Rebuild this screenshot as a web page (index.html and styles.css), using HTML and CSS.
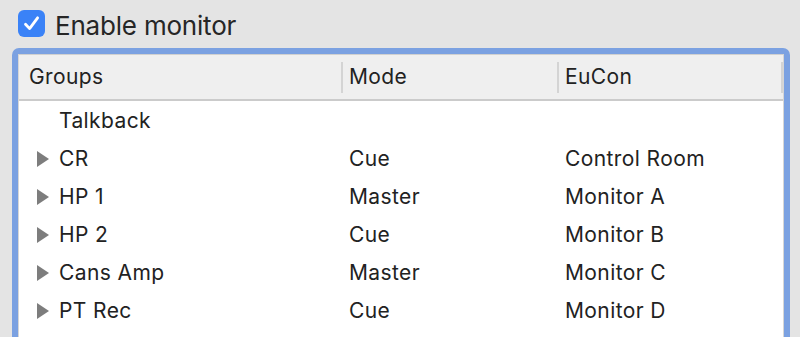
FILE: index.html
```html
<!DOCTYPE html>
<html>
<head>
<meta charset="utf-8">
<link rel="stylesheet" href="styles.css">
</head>
<body>
<div class="page">
  <label class="enable">
    <span class="checkbox">
      <svg viewBox="0 0 27 27" width="27" height="27"><path d="M7.5 14.2 L11.6 18.6 L19.6 7.8" fill="none" stroke="#fff" stroke-width="2.8" stroke-linecap="round" stroke-linejoin="round"/></svg>
    </span>
    <span class="enable-text">Enable monitor</span>
  </label>
  <div class="frame">
    <div class="table">
      <div class="head">
        <div class="hcell c1">Groups</div>
        <div class="hcell c2">Mode</div>
        <div class="hcell c3">EuCon</div>
      </div>
      <div class="row">
        <div class="cell c1"><span class="notri"></span>Talkback</div>
        <div class="cell c2"></div>
        <div class="cell c3"></div>
      </div>
      <div class="row">
        <div class="cell c1"><span class="tri"></span>CR</div>
        <div class="cell c2">Cue</div>
        <div class="cell c3">Control Room</div>
      </div>
      <div class="row">
        <div class="cell c1"><span class="tri"></span>HP 1</div>
        <div class="cell c2">Master</div>
        <div class="cell c3">Monitor A</div>
      </div>
      <div class="row">
        <div class="cell c1"><span class="tri"></span>HP 2</div>
        <div class="cell c2">Cue</div>
        <div class="cell c3">Monitor B</div>
      </div>
      <div class="row">
        <div class="cell c1"><span class="tri"></span>Cans Amp</div>
        <div class="cell c2">Master</div>
        <div class="cell c3">Monitor C</div>
      </div>
      <div class="row">
        <div class="cell c1"><span class="tri"></span>PT Rec</div>
        <div class="cell c2">Cue</div>
        <div class="cell c3">Monitor D</div>
      </div>
      <div class="row">
        <div class="cell c1"></div>
        <div class="cell c2"></div>
        <div class="cell c3"></div>
      </div>
    </div>
  </div>
</div>
</body>
</html>
```

FILE: styles.css
```css
html, body {
  margin: 0;
  padding: 0;
  background: #e4e4e4;
  overflow: hidden;
}
.page {
  width: 800px;
  height: 337px;
  overflow: hidden;
  font-family: "Inter", "Liberation Sans", sans-serif;
  color: #222;
}
.enable {
  display: flex;
  align-items: center;
  height: 48px;
  padding-left: 18px;
  padding-bottom: 0;
  box-sizing: border-box;
}
.checkbox {
  width: 27px;
  height: 27px;
  border-radius: 6px;
  background: #3a82f7;
  display: flex;
  margin-bottom: 1px;
}
.enable-text {
  margin-left: 10px;
  font-size: 26px;
  letter-spacing: -0.2px;
  color: #262626;
  margin-top: 2px;
}
.frame {
  margin-left: 12px;
  width: 778px;
  height: 320px;
  box-sizing: border-box;
  border: 6px solid #7ba1e1;
  border-bottom: none;
  border-radius: 7px 7px 0 0;
  background: #fff;
}
.table {
  border-top: 1px solid #d0d0d0;
  border-left: 1px solid #d6d6d6;
  border-right: 1px solid #d6d6d6;
  height: 100%;
  box-sizing: border-box;
}
.head {
  display: flex;
  height: 46px;
  background: #efefef;
  border-bottom: 2px solid #cbcbcb;
  box-sizing: border-box;
}
.hcell {
  display: flex;
  align-items: center;
  font-size: 21px;
  letter-spacing: 0.4px;
  color: #222;
  box-sizing: border-box;
  position: relative;
  padding-bottom: 1px;
}
.hcell.c1 { padding-left: 10px; }
.hcell.c2, .hcell.c3 { padding-left: 7px; }
.hcell.c2::before, .hcell.c3::before, .hcell.c3::after {
  content: "";
  position: absolute;
  left: -1px;
  top: 7px;
  bottom: 6px;
  width: 2px;
  background: #d4d4d4;
}
.hcell.c3::after {
  left: auto;
  right: 0;
}
.c1 { width: 323px; flex: none; }
.c2 { width: 216px; flex: none; }
.c3 { flex: 1; }
.row {
  display: flex;
  height: 38px;
}
.cell {
  display: flex;
  align-items: center;
  font-size: 21px;
  letter-spacing: 0.4px;
  color: #222;
  box-sizing: border-box;
}
.cell.c1 { padding-left: 18px; }
.cell.c2, .cell.c3 { padding-left: 7px; }
.tri, .notri {
  width: 0;
  height: 0;
  margin-right: 10px;
  border-top: 8px solid transparent;
  border-bottom: 8px solid transparent;
  border-left: 12px solid #7d7d7d;
  margin-top: 2px;
}
.notri {
  border-left-color: transparent;
}
```
